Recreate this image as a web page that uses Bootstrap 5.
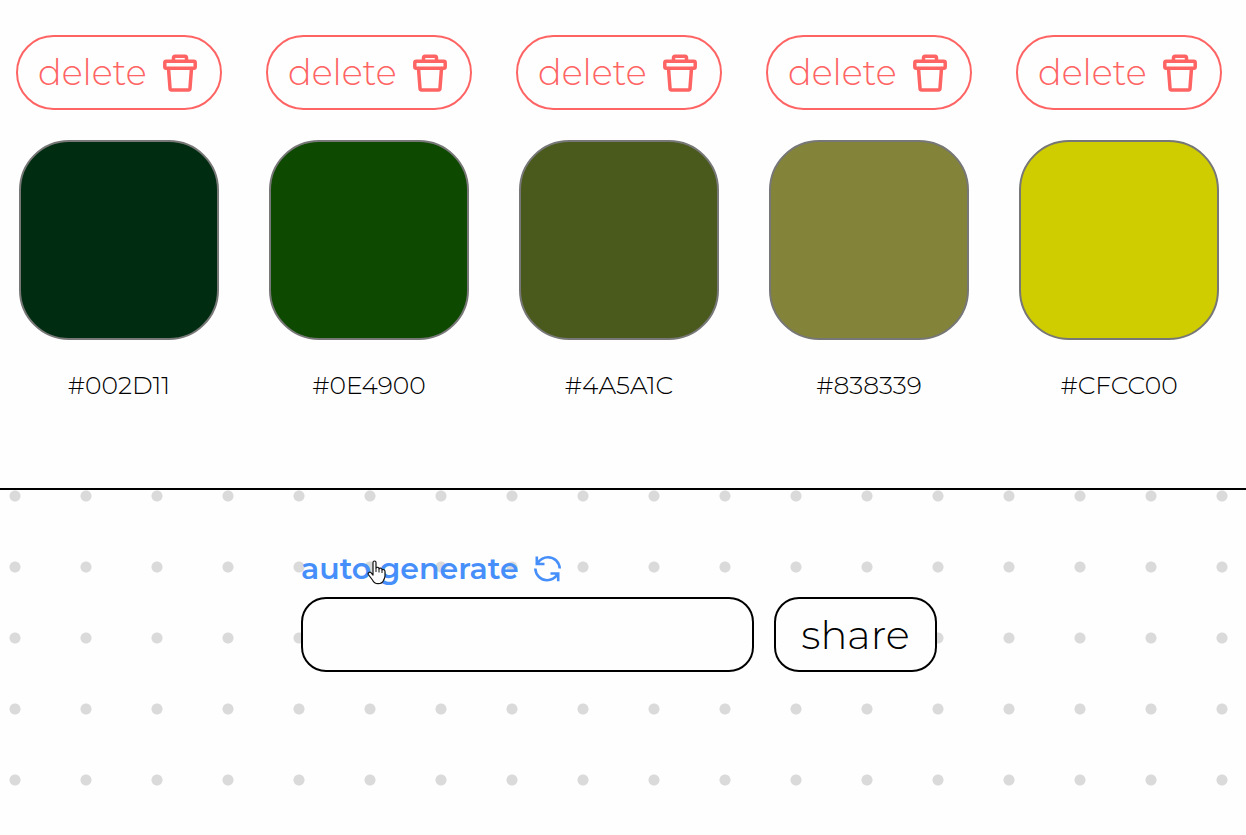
<!DOCTYPE html>
<html lang="en">
<head>
<meta charset="utf-8">
<meta name="viewport" content="width=device-width, initial-scale=1">
<title>Colour palette</title>
<link href="https://cdn.jsdelivr.net/npm/bootstrap@5.3.0/dist/css/bootstrap.min.css" rel="stylesheet">
<style>
  body { background: #fefefe; color: #000; font-family: Montserrat, Inter, sans-serif; font-weight: 300; overflow-x: hidden; }
  .palette { gap: 44px; padding: 35px 0 88px; border-bottom: 2px solid #000; }
  .swatch-item { width: 206px; }
  .delete-btn { --bs-btn-color: #ff6464; --bs-btn-border-color: #ff6464; --bs-btn-hover-color: #fff; --bs-btn-hover-bg: #ff6464;
    height: 75px; border-width: 2px; font-size: 35px; line-height: 40px; font-weight: 300; padding: 0 21px 0 20px; }
  .swatch { width: 200px; height: 200px; margin: 30px 0; border: 2px solid #777; border-radius: 50px; }
  .hex { font-size: 25px; line-height: 30px; }
  .share-area { min-height: 345px; padding-top: 63px;
    background: radial-gradient(circle at 15px 6px, #dadada 5px, transparent 6px) 0 0 / 71px 71px,
                radial-gradient(circle at 15px 77px, #dadada 5px, transparent 6px) 0 0 / 71px 71px; }
  .share-form { width: 636px; max-width: 100%; }
  .auto-link { color: #468ffa; font-size: 30px; line-height: 32px; font-weight: 600; gap: 15px; margin-bottom: 12px; }
  .share-row { gap: 20px; }
  .share-field { height: 75px; border: 2px solid #000; border-radius: 25px; background: #fefefe; font-size: 32px; }
  .share-btn { --bs-btn-color: #000; --bs-btn-bg: #fefefe; --bs-btn-border-color: #000; --bs-btn-hover-bg: #eee; --bs-btn-hover-border-color: #000;
    width: 163px; height: 75px; border-width: 2px; border-radius: 25px; font-size: 40px; line-height: 48px; font-weight: 300; padding: 0; }
  .pointer { left: 66px; top: 7px; }
</style>
</head>
<body>
<main>
  <section class="palette d-flex flex-wrap justify-content-center pe-2" id="palette" aria-label="Palette"></section>
  <section class="share-area d-flex justify-content-center pe-2">
    <form class="share-form" onsubmit="return false">
      <div class="position-relative">
        <a href="#" class="auto-link d-inline-flex align-items-center text-decoration-none">auto generate
          <svg width="28" height="28" viewBox="0 0 28 28" fill="none" stroke="currentColor" stroke-width="2.6" aria-hidden="true">
            <path d="M2.8 1.5V9H10.5M3 8.8C6 4.5 9.5 2.3 14 2.3C20.5 2.3 25.4 7 25.7 13.5M1.3 13.5C1.6 20.5 7 25.2 13 25.2C17.5 25.2 21 23 24 18.7M16.5 18.5H24.2V26.3"/>
          </svg>
        </a>
        <svg class="pointer position-absolute" width="20" height="25" viewBox="0 0 20 25" aria-hidden="true">
          <path fill="#fefefe" stroke="#111" stroke-width="1.2" stroke-linejoin="round" d="M6 14V2.5C6 .5 9 .5 9 2.5V8C10 6.7 12 7.2 12 8.8C13 7.7 15 8.2 15 9.8C16.5 9 18 10 18 11.5V16C18 18 17 19 16.5 20.5C15.5 23 14 23.7 11 23.7C8 23.7 6.5 22.2 5.5 20L1.3 14.5C.5 12.8 2.8 11.3 4 12.6L6 15Z"/>
          <path fill="none" stroke="#111" d="M9 8V12M12 9V12.5M15 10V13"/>
        </svg>
      </div>
      <div class="share-row d-flex">
        <input type="text" class="share-field form-control flex-fill" aria-label="Palette name">
        <button type="submit" class="share-btn btn flex-shrink-0">share</button>
      </div>
    </form>
  </section>
</main>
<script>
  const colours = ["#002D11", "#0E4900", "#4A5A1C", "#838339", "#CFCC00"];
  document.getElementById("palette").innerHTML = colours.map(c => `
    <div class="swatch-item d-flex flex-column align-items-center">
      <button type="button" class="delete-btn btn rounded-pill w-100 d-flex align-items-center justify-content-between">delete
        <svg width="38" height="40" viewBox="0 0 38 40" fill="none" stroke="currentColor" stroke-width="3.5" stroke-linejoin="round" stroke-linecap="round" aria-hidden="true">
          <rect x="3.8" y="8.3" width="30.4" height="7" rx="1.5"/>
          <path d="M12.5 8V5C12.5 4 13 3.2 14 3.2H24C25 3.2 25.5 4 25.5 5V8M7.5 15.5L9 35C9 36.3 9.6 37 10.7 37H27.3C28.4 37 29 36.3 29 35L30.5 15.5"/>
        </svg>
      </button>
      <div class="swatch" style="background:${c}"></div>
      <div class="hex">${c}</div>
    </div>`).join("");
</script>
<script src="https://cdn.jsdelivr.net/npm/bootstrap@5.3.0/dist/js/bootstrap.bundle.min.js"></script>
</body>
</html>
